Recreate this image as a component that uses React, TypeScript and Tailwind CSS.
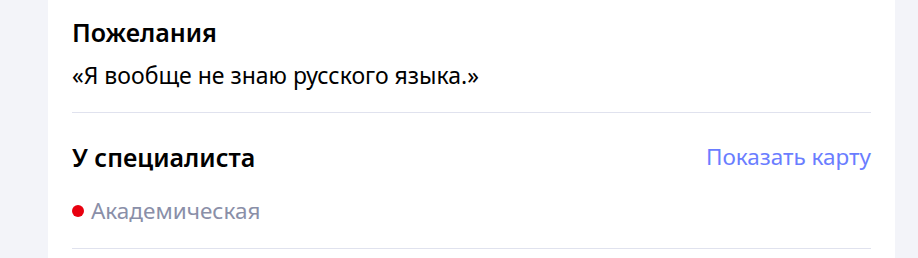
export default function App() {
  return (
    <div className="min-h-[258px] bg-[#f3f4f9] px-[48px] font-['Noto_Sans',sans-serif] text-black">
      <div className="w-[847px] bg-white px-6 pt-[16px] pb-[9px]">
        <section className="border-b border-[#e0e2ee] pb-[21px]">
          <h2 className="text-[25px] leading-[32px] font-semibold">Пожелания</h2>
          <p className="mt-[11px] text-[23px] leading-[32px]">«Я вообще не знаю русского языка.»</p>
        </section>
        <section className="border-b border-[#e0e2ee] pt-[28px] pb-[21px]">
          <div className="flex items-center justify-between">
            <h2 className="text-[25px] leading-[32px] font-semibold">У специалиста</h2>
            <a href="#" className="text-[22.5px] leading-[32px] text-[#6a7dff]">Показать карту</a>
          </div>
          <div className="mt-[22px] flex items-center gap-[7px]">
            <span className="h-[12px] w-[12px] rounded-full bg-[#e8000f]" />
            <span className="text-[22.5px] leading-[32px] text-[#8a8fa8]">Академическая</span>
          </div>
        </section>
      </div>
    </div>
  );
}
